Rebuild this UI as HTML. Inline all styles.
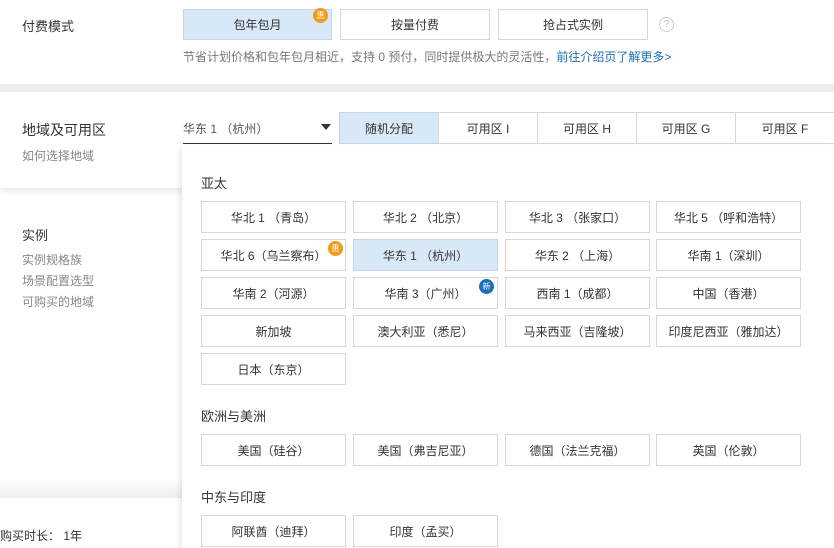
<!DOCTYPE html>
<html><head><meta charset="utf-8"><style>
*{margin:0;padding:0;box-sizing:border-box}
body{width:834px;height:548px;overflow:hidden;background:#fff;font-family:"Liberation Sans","Noto Sans CJK SC",sans-serif;color:#333;position:relative}
.a{position:absolute}
.btn{position:absolute;border:1px solid #d7d7d7;background:#fff;font-size:12px;color:#333;display:flex;align-items:center;justify-content:center;white-space:nowrap}
.sel{background:#d9e8f7;border-color:#c3d6ea}
.badge{position:absolute;width:15px;height:15px;border-radius:50%;color:#fff;font-size:8px;display:flex;align-items:center;justify-content:center}
.h{position:absolute;font-size:13px;color:#333;left:201px}
.g{font-size:12px;color:#888;position:absolute}
</style></head><body>
<!-- section 1 -->
<div class="a" style="left:22px;top:16px;font-size:13px">付费模式</div>
<div class="btn sel" style="left:183px;top:9px;width:149px;height:31px">包年包月</div>
<div class="badge" style="left:313px;top:8px;background:#f39a1b">惠</div>
<div class="btn" style="left:340px;top:9px;width:150px;height:31px">按量付费</div>
<div class="btn" style="left:498px;top:9px;width:150px;height:31px">抢占式实例</div>
<div class="a" style="left:659px;top:17px;width:15px;height:15px;border:1px solid #ccc;border-radius:50%;font-size:10px;color:#bbb;text-align:center;line-height:13px">?</div>
<div class="a" style="left:183px;top:48px;font-size:12px;color:#777">节省计划价格和包年包月相近，支持 0 预付，同时提供极大的灵活性，<span style="color:#1e6fb8">前往介绍页了解更多&gt;</span></div>
<div class="a" style="left:0;top:84px;width:834px;height:8px;background:#ededed"></div>
<!-- section 2 -->
<div class="a" style="left:0;top:92px;width:834px;height:96px;background:#fff;box-shadow:0 4px 6px rgba(0,0,0,0.08)"></div>
<div class="a" style="left:22px;top:120px;font-size:14px">地域及可用区</div>
<div class="g" style="left:22px;top:147px">如何选择地域</div>
<div class="a" style="left:183px;top:120px;font-size:12px;color:#555">华东 1 （杭州）</div>
<div class="a" style="left:321px;top:124px;width:0;height:0;border-left:5px solid transparent;border-right:5px solid transparent;border-top:6px solid #333"></div>
<div class="a" style="left:183px;top:143px;width:149px;height:1px;background:#333"></div>
<div class="btn sel" style="left:339px;top:112px;width:100px;height:32px">随机分配</div>
<div class="btn" style="left:438px;top:112px;width:100px;height:32px">可用区 I</div>
<div class="btn" style="left:537px;top:112px;width:100px;height:32px">可用区 H</div>
<div class="btn" style="left:636px;top:112px;width:100px;height:32px">可用区 G</div>
<div class="btn" style="left:735px;top:112px;width:100px;height:32px">可用区 F</div>
<!-- section 3 left -->
<div class="a" style="left:22px;top:225px;font-size:13px">实例</div>
<div class="g" style="left:22px;top:251px">实例规格族</div>
<div class="g" style="left:22px;top:272px">场景配置选型</div>
<div class="g" style="left:22px;top:293px">可购买的地域</div>
<div class="a" style="left:0;top:478px;width:182px;height:20px;background:linear-gradient(#fff,#eee)"></div>
<div class="a" style="left:0;top:527px;font-size:12px;color:#333">购买时长： 1年</div>
<!-- dropdown -->
<div class="a" style="left:182px;top:146px;width:652px;height:402px;background:#fff;box-shadow:-2px 2px 6px rgba(0,0,0,0.1)"></div>
<div class="h" style="top:173px">亚太</div>
<div class="btn" style="left:201px;top:201px;width:145px;height:32px">华北 1 （青岛）</div>
<div class="btn" style="left:353px;top:201px;width:145px;height:32px">华北 2 （北京）</div>
<div class="btn" style="left:505px;top:201px;width:145px;height:32px">华北 3 （张家口）</div>
<div class="btn" style="left:656px;top:201px;width:145px;height:32px">华北 5 （呼和浩特）</div>
<div class="btn" style="left:201px;top:239px;width:145px;height:32px">华北 6（乌兰察布）</div>
<div class="badge" style="left:328px;top:241px;background:#f39a1b">惠</div>
<div class="btn sel" style="left:353px;top:239px;width:145px;height:32px">华东 1 （杭州）</div>
<div class="btn" style="left:505px;top:239px;width:145px;height:32px">华东 2 （上海）</div>
<div class="btn" style="left:656px;top:239px;width:145px;height:32px">华南 1（深圳）</div>
<div class="btn" style="left:201px;top:277px;width:145px;height:32px">华南 2（河源）</div>
<div class="btn" style="left:353px;top:277px;width:145px;height:32px">华南 3（广州）</div>
<div class="badge" style="left:479px;top:279px;background:#1a6fbb">新</div>
<div class="btn" style="left:505px;top:277px;width:145px;height:32px">西南 1（成都）</div>
<div class="btn" style="left:656px;top:277px;width:145px;height:32px">中国（香港）</div>
<div class="btn" style="left:201px;top:315px;width:145px;height:32px">新加坡</div>
<div class="btn" style="left:353px;top:315px;width:145px;height:32px">澳大利亚（悉尼）</div>
<div class="btn" style="left:505px;top:315px;width:145px;height:32px">马来西亚（吉隆坡）</div>
<div class="btn" style="left:656px;top:315px;width:145px;height:32px">印度尼西亚（雅加达）</div>
<div class="btn" style="left:201px;top:353px;width:145px;height:32px">日本（东京）</div>
<div class="h" style="top:406px">欧洲与美洲</div>
<div class="btn" style="left:201px;top:434px;width:145px;height:32px">美国（硅谷）</div>
<div class="btn" style="left:353px;top:434px;width:145px;height:32px">美国（弗吉尼亚）</div>
<div class="btn" style="left:505px;top:434px;width:145px;height:32px">德国（法兰克福）</div>
<div class="btn" style="left:656px;top:434px;width:145px;height:32px">英国（伦敦）</div>
<div class="h" style="top:487px">中东与印度</div>
<div class="btn" style="left:201px;top:515px;width:145px;height:32px">阿联酋（迪拜）</div>
<div class="btn" style="left:353px;top:515px;width:145px;height:32px">印度（孟买）</div>
</body></html>
